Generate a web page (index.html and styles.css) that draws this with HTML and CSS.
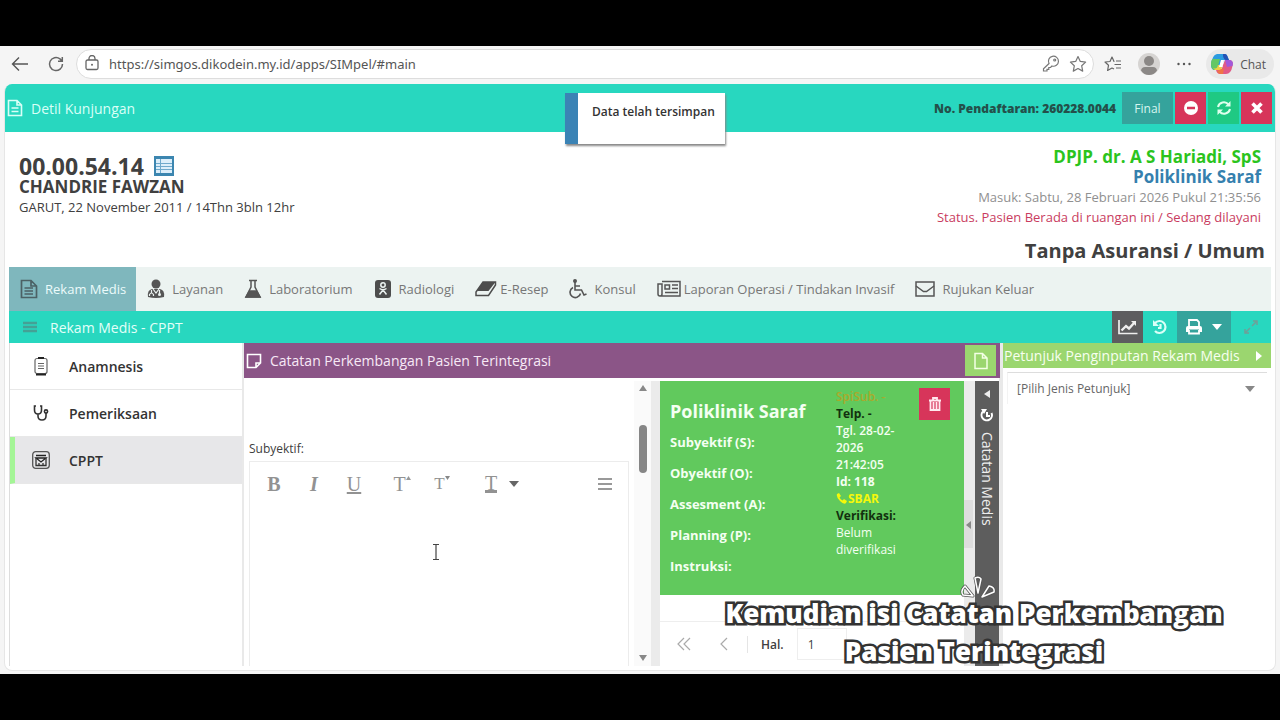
FILE: index.html
```html
<!DOCTYPE html>
<html lang="id">
<head>
    <meta charset="UTF-8">
    <meta name="viewport" content="width=device-width, initial-scale=1.0">
    <title>SIMpel - Detil Kunjungan</title>
    <link rel="stylesheet" href="styles.css">
</head>
<body>

    <div class="browser">
        <!-- Browser bar -->
        <div class="toolbar">
            <button class="nav-btn" aria-label="Kembali">
                <svg width="18" height="18" viewBox="0 0 18 18" fill="none" stroke="#555" stroke-width="1.4"><path d="M17 9H2M8 2.500L1.500 9L8 15.500"/></svg>
            </button>
            <button class="nav-btn" aria-label="Muat ulang">
                <svg width="18" height="18" viewBox="0 0 18 18" fill="none" stroke="#666" stroke-width="1.500"><path d="M15.500 9A6.500 6.500 0 1 1 13 3.900L15 6M15.300 2V6.200H11"/></svg>
            </button>
            <div class="address">
                <svg width="16" height="18" viewBox="0 0 16 18" fill="none" stroke="#666" stroke-width="1.300"><rect x="2" y="5" width="12" height="9.500" rx="1.500"/><path d="M5 5V3.500a3 3 0 0 1 6 0V5"/><circle cx="8" cy="9.700" r="1" fill="#666" stroke="none"/></svg>
                <input class="url" type="text" aria-label="Alamat" value="https://simgos.dikodein.my.id/apps/SIMpel/#main">
                <svg width="18" height="18" viewBox="0 0 18 18" fill="none" stroke="#777" stroke-width="1.200"><path d="M7 8.500A5 5 0 1 1 10 11L8.500 12.500H6.800V14.300H5V16H1.500V13.700Z"/><circle cx="12.700" cy="5" r="1"/></svg>
                <svg width="18" height="18" viewBox="0 0 18 18" fill="none" stroke="#777" stroke-width="1.200" stroke-linejoin="round"><path d="M9 1.500L11.300 6.400L16.600 7.100L12.700 10.800L13.700 16.100L9 13.500L4.300 16.100L5.300 10.800L1.400 7.100L6.700 6.400Z"/></svg>
            </div>
            <div class="browser-tools">
                <svg width="18" height="18" viewBox="0 0 18 18" fill="none" stroke="#666" stroke-width="1.200" stroke-linejoin="round"><path d="M10.500 6.500H10L8 2L6 6.500L1 7L4.500 10.300L3.600 15.500L8 13L10 14M12 6H17M10.500 9.500H17M12 13H17"/></svg>
                <svg width="22" height="22" viewBox="0 0 22 22"><circle cx="11" cy="11" r="11" fill="#d6d4d2"/><circle cx="11" cy="8" r="5" fill="#8b8886"/><path d="M3 17.500Q3.500 14 7 14H15Q18.500 14 19 17.500Q16 22 11 22T3 17.500Z" fill="#8b8886"/></svg>
                <svg width="16" height="16" viewBox="0 0 16 16" fill="#555"><circle cx="2.500" cy="8" r="1.200"/><circle cx="8" cy="8" r="1.200"/><circle cx="13.500" cy="8" r="1.200"/></svg>
                <button class="chat">
                    <svg width="24" height="22" viewBox="0 0 24 22">
                        <path d="M7 1H15Q17 1 17.800 4L19 7H14L10 17H5Q1 17 1 12Q2 2 7 1Z" fill="#2a9be0"/>
                        <path d="M1 11Q1 5 5 6H10L8 13Q7 17 4 17Q1 16 1 11Z" fill="#64c765"/>
                        <path d="M3 15Q7 17 8 12H13L11 17H5Z" fill="#f0cf45"/>
                        <path d="M13 1H15Q17 1 18 5L19 7H16Q14 7 13 3Z" fill="#2452b5"/>
                        <path d="M15 7H20Q24 8 22.500 13Q21 21 16 21H10Q7 21 6 17H10Q12 17 13 12Z" fill="#e15a87"/>
                        <path d="M15 7H20Q24 8 22.500 13L17 14Z" fill="#a259d9"/>
                        <path d="M7 18L14 15L13 21H10Q8 21 7 18Z" fill="#f07446"/>
                        <path d="M11 7L14 7L12.500 14H9Z" fill="#fff"/>
                    </svg>
                    Chat
                </button>
            </div>
        </div>

        <div class="app">
            <!-- Header -->
            <header class="app-header">
                <svg width="16" height="18" viewBox="0 0 16 18" fill="none" stroke="#d9fff7" stroke-width="1.600"><path d="M1.500 1.500H10L14.500 6V16.500H1.500ZM10 1.500V6H14.500M4.500 9H11.500M4.500 12.500H11.500"/></svg>
                <h1>Detil Kunjungan</h1>
                <span class="reg-no">No. Pendaftaran: 260228.0044</span>
                <div class="header-actions">
                    <button class="btn btn-final">Final</button>
                    <button class="btn btn-red" aria-label="Batal">
                        <svg width="16" height="16" viewBox="0 0 16 16"><circle cx="8" cy="8" r="7" fill="#fff"/><path d="M4 8H12" stroke="#d7355a" stroke-width="2.400"/></svg>
                    </button>
                    <button class="btn btn-green" aria-label="Segarkan">
                        <svg width="16" height="16" viewBox="0 0 16 16" fill="none" stroke="#dfffec" stroke-width="2"><path d="M2 7A6 6 0 0 1 12.500 4.500M14 9A6 6 0 0 1 3.500 11.500"/><path d="M14.500 1V6.500H9ZM1.500 15V9.500H7Z" fill="#dfffec" stroke="none"/></svg>
                    </button>
                    <button class="btn btn-red" aria-label="Tutup">
                        <svg width="14" height="14" viewBox="0 0 14 14" stroke="#fff" stroke-width="3.600"><path d="M2.500 2.500L11.500 11.500M11.500 2.500L2.500 11.500"/></svg>
                    </button>
                </div>
            </header>

            <!-- Patient -->
            <section class="patient">
                <div class="patient-id">
                    <div class="mrn">00.00.54.14
                        <svg width="20" height="20" viewBox="0 0 20 20"><rect width="20" height="20" fill="#3c86b0"/><rect x="2" y="3" width="16" height="14" fill="#dceefa"/><path d="M6.500 3V17M2 7.500H18M2 10.500H18M2 13.500H18" stroke="#6fa9cc"/></svg>
                    </div>
                    <div class="name">CHANDRIE FAWZAN</div>
                    <div class="birth">GARUT, 22 November 2011 / 14Thn 3bln 12hr</div>
                </div>
                <div class="visit">
                    <div class="doctor">DPJP. dr. A S Hariadi, SpS</div>
                    <div class="clinic">Poliklinik Saraf</div>
                    <div class="entry">Masuk: Sabtu, 28 Februari 2026 Pukul 21:35:56</div>
                    <div class="status">Status. Pasien Berada di ruangan ini / Sedang dilayani</div>
                    <div class="insurance">Tanpa Asuransi / Umum</div>
                </div>
            </section>

            <div class="record">
                <!-- Tabs -->
                <nav class="tabs">
                    <a href="#rekam" class="tab active">
                        <svg width="18" height="20" viewBox="0 0 18 20" fill="none" stroke="#4c6165" stroke-width="1.700"><path d="M1.500 1.500H11L16.500 7V18.500H1.500ZM11 1.500V7H16.500M4.500 9H13M4.500 12H13M4.500 15H13"/></svg>
                        Rekam Medis
                    </a>
                    <a href="#layanan" class="tab">
                        <svg width="18" height="20" viewBox="0 0 18 20"><circle cx="9" cy="5" r="4.500" fill="#555"/><path d="M1 18Q0 11 5 10H13Q18 11 17 18Q9 20 1 18Z" fill="#555"/><path d="M6 10L9 14L12 10M4.500 11V14M2.500 17V15.500Q4.500 12.500 6.500 15.500V17M12.500 11V15" fill="none" stroke="#ecf3f1" stroke-width="1.200"/><circle cx="12.500" cy="15.500" r="1.500" fill="#ecf3f1"/></svg>
                        Layanan
                    </a>
                    <a href="#lab" class="tab">
                        <svg width="18" height="20" viewBox="0 0 18 20" fill="none" stroke="#555" stroke-width="1.500"><path d="M5 1.500H13M7 1.500V8L2 18H16L11 8V1.500"/><path d="M5.500 12H12.500L16 18H2Z" fill="#555"/></svg>
                        Laboratorium
                    </a>
                    <a href="#radiologi" class="tab">
                        <svg width="18" height="18" viewBox="0 0 18 18"><rect x="1" width="16" height="18" rx="3" fill="#4d4d4d"/><g fill="none" stroke="#ecf3f1" stroke-width="1.500"><circle cx="9" cy="5" r="2.200"/><path d="M5.500 8.500Q9 11 12.500 8.500M9 10L5.500 14.500M9 10L12.500 14.500"/></g></svg>
                        Radiologi
                    </a>
                    <a href="#resep" class="tab snug">
                        <svg width="22" height="18" viewBox="0 0 22 18"><path d="M8 2H20.500L13.500 11H2Z" fill="#4d4d4d"/><path d="M8 2H20.500V5L13.500 15.500H1V12Z" fill="none" stroke="#4d4d4d" stroke-width="1.500"/></svg>
                        E-Resep
                    </a>
                    <a href="#konsul" class="tab">
                        <svg width="18" height="20" viewBox="0 0 18 20" fill="none" stroke="#555" stroke-width="1.600"><circle cx="6" cy="2" r="1.200" fill="#555"/><path d="M6 3V11H12.500L15 16L17.500 15M6 7H11M4 8.500A5.300 5.300 0 1 0 11.500 14.500"/></svg>
                        Konsul
                    </a>
                    <a href="#laporan" class="tab snug">
                        <svg width="24" height="18" viewBox="0 0 24 18" fill="none" stroke="#555" stroke-width="1.500"><path d="M5 1.500H23V16H3Q1 16 1 14V4H5V14Q5 16 3 16M15 5H21M15 8.500H21M8 12.500H21"/><rect x="8" y="5" width="4.500" height="4"/></svg>
                        Laporan Operasi / Tindakan Invasif
                    </a>
                    <a href="#rujukan" class="tab">
                        <svg width="20" height="18" viewBox="0 0 20 18" fill="none" stroke="#555" stroke-width="1.500"><rect x="1" y="2" width="18" height="14"/><path d="M1 6L8.500 11.500H11.500L19 6"/></svg>
                        Rujukan Keluar
                    </a>
                </nav>

                <div class="subheader">
                    <svg width="14" height="12" viewBox="0 0 14 12" stroke="#44a195" stroke-width="2.400"><path d="M0 2H14M0 6H14M0 10H14"/></svg>
                    <h2>Rekam Medis - CPPT</h2>
                    <div class="sub-actions">
                        <button class="sub-btn dark" aria-label="Grafik">
                            <svg width="20" height="16" viewBox="0 0 20 16" fill="none" stroke="#eee" stroke-width="1.700"><path d="M1 1V14.500H19.500"/><path d="M3.500 11.500L8 7L11 9.500L16 4" stroke-width="2.400"/><path d="M13 2H18V7Z" fill="#eee" stroke="none"/></svg>
                        </button>
                        <button class="sub-btn" aria-label="Riwayat">
                            <svg width="16" height="16" viewBox="0 0 16 16" fill="none" stroke="#d9fff7" stroke-width="2.200"><path d="M3 4A6 6 0 1 1 3 12M8.500 5V9H6"/><path d="M1 1V7H7Z" fill="#d9fff7" stroke="none"/></svg>
                        </button>
                        <button class="sub-btn print" aria-label="Cetak">
                            <svg width="16" height="16" viewBox="0 0 16 16"><path d="M3 7V1H11L13 3V7" fill="none" stroke="#fff" stroke-width="1.800"/><path d="M0 9Q0 7 2 7H14Q16 7 16 9V13H13V10.500H3V13H0Z" fill="#fff"/><path d="M3 11V14.500H13V11" fill="none" stroke="#fff" stroke-width="1.800"/></svg>
                            <svg width="10" height="6" viewBox="0 0 10 6"><path d="M0 0H10L5 6Z" fill="#fff"/></svg>
                        </button>
                        <button class="sub-btn" aria-label="Layar penuh">
                            <svg width="14" height="14" viewBox="0 0 14 14" fill="none" stroke="#6f9f98" stroke-width="1.500"><path d="M8 6L12.500 1.500M6 8L1.500 12.500M9 1H13V5M1 9V13H5"/></svg>
                        </button>
                    </div>
                </div>

                <div class="columns">
                    <!-- Menu -->
                    <nav class="side-menu">
                        <a href="#anamnesis" class="menu-item">
                            <svg width="18" height="20" viewBox="0 0 18 20" fill="none" stroke="#666" stroke-width="1.200"><rect x="3" y="2.500" width="12" height="15" rx="2"/><path d="M6 7.500H12M6 10H12M6 12.500H12"/><path d="M6 2H12M4 18.500H14" stroke="#222" stroke-width="2.200"/></svg>
                            Anamnesis
                        </a>
                        <a href="#pemeriksaan" class="menu-item">
                            <svg width="18" height="18" viewBox="0 0 18 18" fill="none" stroke="#333" stroke-width="1.600"><path d="M4 2H2.500V6Q2.500 10 6 10T9.500 6V2H8M6 10V12Q6 16 10 16T14 12V9"/><circle cx="14" cy="7.500" r="1.600"/></svg>
                            Pemeriksaan
                        </a>
                        <a href="#cppt" class="menu-item active">
                            <svg width="18" height="18" viewBox="0 0 18 18" fill="none" stroke="#555" stroke-width="1.300"><rect x=".700" y=".700" width="16.600" height="16.600" rx="3"/><path d="M4 4.500H14M4 7H14L9 11Z" stroke="#222"/><path d="M4 7V14.500H14V7M7 14V12M11 14V12" stroke="#333"/></svg>
                            CPPT
                        </a>
                    </nav>

                    <!-- CPPT -->
                    <main class="cppt">
                        <div class="cppt-header">
                            <svg width="16" height="16" viewBox="0 0 16 16" fill="none" stroke="#fff" stroke-width="1.600"><path d="M1.500 1.500H14.500V10L10 14.500H1.500ZM14.500 10H10V14.500"/></svg>
                            <h3>Catatan Perkembangan Pasien Terintegrasi</h3>
                            <button class="new-btn" aria-label="Baru">
                                <svg width="14" height="18" viewBox="0 0 14 18" fill="none" stroke="#f3ffe5" stroke-width="1.500"><path d="M1 1.500H8.500L13 6V16.500H1ZM8.500 1.500V6H13"/></svg>
                            </button>
                        </div>
                        <div class="cppt-body">
                            <div class="form">
                                <label for="subyektif">Subyektif:</label>
                                <div class="editor">
                                    <div class="editor-bar">
                                        <button class="tool"><b>B</b></button>
                                        <button class="tool"><b><i>I</i></b></button>
                                        <button class="tool"><u>U</u></button>
                                        <button class="tool grow" aria-label="Perbesar">T<svg width="5" height="4" viewBox="0 0 5 4"><path d="M0 4H5L2.500 0Z" fill="#999"/></svg></button>
                                        <button class="tool shrink" aria-label="Perkecil">T<svg width="5" height="4" viewBox="0 0 5 4"><path d="M0 0H5L2.500 4Z" fill="#888"/></svg></button>
                                        <button class="tool color" aria-label="Warna teks"><span>T</span><svg width="10" height="6" viewBox="0 0 10 6"><path d="M0 0H10L5 6Z" fill="#666"/></svg></button>
                                        <button class="tool more" aria-label="Menu"><svg width="14" height="12" viewBox="0 0 14 12" stroke="#999" stroke-width="2"><path d="M0 1H14M0 6H14M0 11H14"/></svg></button>
                                    </div>
                                    <textarea id="subyektif"></textarea>
                                </div>
                            </div>
                            <div class="scrollbar">
                                <svg width="8" height="6" viewBox="0 0 8 6"><path d="M0 6H8L4 0Z" fill="#888"/></svg>
                                <div class="thumb"></div>
                                <svg width="8" height="6" viewBox="0 0 8 6"><path d="M0 0H8L4 6Z" fill="#888"/></svg>
                            </div>
                            <div class="splitter"></div>
                            <div class="history">
                                <article class="note">
                                    <div class="soap">
                                        <h4>Poliklinik Saraf</h4>
                                        <p>Subyektif (S):</p>
                                        <p>Obyektif (O):</p>
                                        <p>Assesment (A):</p>
                                        <p>Planning (P):</p>
                                        <p>Instruksi:</p>
                                    </div>
                                    <div class="meta">
                                        <div class="sub">SpiSub. -</div>
                                        <div class="black">Telp. -</div>
                                        <div>Tgl. 28-02-2026 21:42:05</div>
                                        <div class="bold">Id: 118</div>
                                        <div class="sbar"><svg width="11" height="11" viewBox="0 0 11 11"><path d="M1 1L3 0L5 3L3.500 4.500Q4.500 6.500 6.500 7.500L8 6L11 8L10 10Q8 12 4 8T1 1Z" fill="#f5f80a"/></svg>SBAR</div>
                                        <div class="black">Verifikasi:</div>
                                        <div class="plain">Belum diverifikasi</div>
                                    </div>
                                    <button class="btn btn-red" aria-label="Hapus">
                                        <svg width="12" height="16" viewBox="0 0 12 16" fill="none" stroke="#ffe9ee" stroke-width="1.800"><path d="M0 4.500H12M4 4V2H8V4M1.500 4V14H10.500V4M4.500 6V13M7.500 6V13"/></svg>
                                    </button>
                                </article>
                                <div class="pager">
                                    <button aria-label="Pertama"><svg width="14" height="14" viewBox="0 0 14 14" fill="none" stroke="#aaa" stroke-width="1.200"><path d="M7 1L1 7L7 13M13 1L7 7L13 13"/></svg></button>
                                    <button aria-label="Sebelumnya"><svg width="8" height="14" viewBox="0 0 8 14" fill="none" stroke="#aaa" stroke-width="1.200"><path d="M7 1L1 7L7 13"/></svg></button>
                                    <label for="halaman">Hal.</label>
                                    <input id="halaman" type="text" value="1">
                                </div>
                            </div>
                            <div class="splitter collapse"><button aria-label="Ciutkan"><svg width="5" height="8" viewBox="0 0 5 8"><path d="M5 0V8L0 4Z" fill="#888"/></svg></button></div>
                            <button class="collapsed-panel">
                                <svg width="6" height="8" viewBox="0 0 6 8"><path d="M6 0V8L0 4Z" fill="#eee"/></svg>
                                <svg width="14" height="14" viewBox="0 0 14 14" fill="none" stroke="#fff" stroke-width="2"><path d="M3 3.500A5.200 5.200 0 1 0 11.500 5M7 4V8H10"/><path d="M1 1H7L4 6Z" fill="#fff" stroke="none"/></svg>
                                Catatan Medis
                            </button>
                        </div>
                    </main>

                    <!-- Petunjuk -->
                    <aside class="guide">
                        <div class="guide-header">
                            <h3>Petunjuk Penginputan Rekam Medis</h3>
                            <svg width="6" height="10" viewBox="0 0 6 10"><path d="M0 0V10L6 5Z" fill="#fff"/></svg>
                        </div>
                        <div class="guide-select">
                            <select aria-label="Jenis petunjuk">
                                <option>[Pilih Jenis Petunjuk]</option>
                            </select>
                            <svg width="10" height="6" viewBox="0 0 10 6"><path d="M0 0H10L5 6Z" fill="#888"/></svg>
                        </div>
                    </aside>
                </div>
            </div>
        </div>
    </div>

    <!-- Overlays -->
    <div class="toast" role="status">Data telah tersimpan</div>
    <svg class="cursor" width="8" height="18" viewBox="0 0 8 18" fill="none" stroke="#444" stroke-width="1.200"><path d="M1 1.500H7M4 1.500V16.500M1 16.500H7"/></svg>
    <div class="caption">
        <svg class="spark" width="36" height="24" viewBox="0 0 36 24" fill="none" stroke-linejoin="round">
            <path d="M13 20L5 10Q0 15 3 19ZM18 17L15 2Q19 0 21 3ZM22 21L29 10Q35 11 34 16Z" stroke="#555" stroke-width="3"/>
            <path d="M13 20L5 10Q0 15 3 19ZM18 17L15 2Q19 0 21 3ZM22 21L29 10Q35 11 34 16Z" stroke="#fff" stroke-width="1.500"/>
        </svg>
        <div>Kemudian isi Catatan Perkembangan</div>
        <div>Pasien Terintegrasi</div>
    </div>

</body>
</html>
```
FILE: styles.css
```css
* {
    box-sizing: border-box;
}
body {
    margin: 0;
    min-height: 100vh;
    padding: 46px 0;
    background: #000;
    display: flex;
    flex-direction: column;
    font-family: "Open Sans", "Noto Sans", sans-serif;
    font-size: 13px;
    color: #404040;
}
h1, h2, h3, h4, p {
    margin: 0;
    font-weight: inherit;
}
button {
    border: none;
    padding: 0;
    background: none;
    font-family: inherit;
    color: inherit;
    cursor: pointer;
}
svg {
    flex: none;
}
a {
    text-decoration: none;
    color: inherit;
}
.browser {
    flex: 1;
    display: flex;
    flex-direction: column;
    background: #f5f5f5;
}

/* Browser bar */
.toolbar {
    display: flex;
    align-items: center;
    height: 36px;
    padding: 0 6px 0 11px;
}
.nav-btn {
    width: 18px;
    height: 18px;
    margin-right: 18px;
}
.address {
    flex: 1;
    display: flex;
    align-items: center;
    gap: 9px;
    height: 30px;
    margin-left: -7px;
    padding: 0 6px 0 7px;
    background: #fff;
    border: 1px solid #ddd;
    border-radius: 15px;
}
.url {
    flex: 1;
    min-width: 0;
    border: none;
    outline: none;
    padding: 0;
    background: none;
    font-family: "Noto Sans", "Open Sans", sans-serif;
    font-size: 13px;
    color: #555;
}
.browser-tools {
    display: flex;
    align-items: center;
    gap: 16px;
    margin-left: 10px;
}
.chat {
    display: flex;
    align-items: center;
    gap: 6px;
    height: 30px;
    padding: 0 8px 0 4px;
    margin-left: -2px;
    border-radius: 15px;
    background: #e9e9e9;
    font-size: 12px;
    color: #555;
}

/* App */
.app {
    flex: 1;
    display: flex;
    flex-direction: column;
    margin: 2px 4px 3px;
    background: #fff;
    border: 1px solid #e6e6e6;
    border-top: none;
    border-radius: 8px;
    overflow: hidden;
}
.app-header {
    display: flex;
    align-items: center;
    height: 48px;
    padding: 0 3px 0 2px;
    background: #28d7bf;
    color: #d9fff7;
}
.app-header h1 {
    margin-left: 8px;
    font-size: 14px;
}
.reg-no {
    margin-left: auto;
    margin-right: 6px;
    font-size: 12px;
    font-weight: 800;
    color: #24504a;
}
.header-actions {
    display: flex;
    gap: 2px;
}
.btn {
    width: 31px;
    height: 32px;
    display: flex;
    align-items: center;
    justify-content: center;
}
.btn-final {
    width: 51px;
    background: #35a39c;
    font-size: 12px;
    color: #d5f5ef;
}
.btn-red {
    background: #d7355a;
}
.btn-green {
    background: #1fc983;
}

/* Patient */
.patient {
    display: flex;
    justify-content: space-between;
    height: 135px;
    padding: 15px 14px 0;
}
.patient-id {
    padding-top: 7px;
}
.mrn {
    display: flex;
    align-items: center;
    gap: 10px;
    font-size: 23px;
    line-height: 24px;
    font-weight: 700;
}
.name {
    font-size: 17px;
    line-height: 18px;
    font-weight: 700;
}
.birth {
    font-size: 13px;
    line-height: 22px;
}
.visit {
    text-align: right;
}
.doctor, .clinic {
    font-size: 17px;
    line-height: 20px;
    font-weight: 700;
    color: #2bc41d;
}
.clinic {
    color: #3580ae;
}
.entry, .status {
    font-size: 13px;
    line-height: 20px;
    color: #909090;
}
.status {
    color: #c93c60;
}
.insurance {
    padding-top: 10px;
    margin-right: -4px;
    font-size: 20px;
    line-height: 28px;
    font-weight: 700;
}

/* Tabs */
.record {
    flex: 1;
    display: flex;
    flex-direction: column;
    margin: 0 4px 4px;
}
.tabs {
    display: flex;
    height: 44px;
    background: #ecf3f1;
    color: #777;
}
.tab {
    display: flex;
    align-items: center;
    gap: 7px;
    padding: 0 10px 0 11px;
    font-size: 13px;
    white-space: nowrap;
}
.tab.snug {
    gap: 3px;
}
.tab.active {
    background: #7fb7bd;
    color: #ecfbfb;
}
.subheader {
    display: flex;
    align-items: center;
    height: 32px;
    padding-left: 14px;
    background: #28d7bf;
    color: #e3fff9;
}
.subheader h2 {
    margin-left: 13px;
    font-size: 14px;
}
.sub-actions {
    display: flex;
    align-self: stretch;
    margin-left: auto;
}
.sub-btn {
    display: flex;
    align-items: center;
    justify-content: center;
    gap: 10px;
    width: 34px;
}
.sub-btn.dark {
    width: 31px;
    background: #5d5d5f;
}
.sub-btn.print {
    width: 54px;
    background: #35a39c;
}
.sub-btn:last-child {
    width: 40px;
}

/* Columns */
.columns {
    flex: 1;
    display: flex;
}
.side-menu {
    flex: 0 0 235px;
    border-left: 1px solid #ddd;
    border-right: 2px solid #e9e9e9;
}
.menu-item {
    display: flex;
    align-items: center;
    gap: 19px;
    height: 47px;
    padding-left: 22px;
    border-bottom: 1px solid #e8e8e8;
    font-size: 14px;
    font-weight: 600;
    color: #333;
}
.menu-item.active {
    padding-left: 17px;
    border-left: 5px solid #a4f596;
    background: #e7e7e9;
}
.cppt {
    flex: 1;
    min-width: 0;
    display: flex;
    flex-direction: column;
}
.cppt-header {
    display: flex;
    align-items: center;
    height: 35px;
    padding: 0 4px 0 2px;
    background: #8b5587;
    color: #f7e9f6;
}
.cppt-header h3 {
    margin-left: 8px;
    font-size: 14px;
}
.new-btn {
    display: flex;
    align-items: center;
    justify-content: center;
    width: 31px;
    height: 31px;
    margin-left: auto;
    background: #9bd66f;
}
.cppt-body {
    flex: 1;
    display: flex;
    padding-top: 3px;
    border-right: 1px solid #e9e9e9;
}
.form {
    flex: 1;
    display: flex;
    flex-direction: column;
    padding: 56px 5px 0;
}
.form label {
    font-size: 12px;
    line-height: 24px;
}
.editor {
    flex: 1;
    display: flex;
    flex-direction: column;
    border: 1px solid #ececec;
    border-bottom: none;
}
.editor-bar {
    display: flex;
    align-items: center;
    height: 44px;
    padding: 0 8px 0 4px;
}
.tool {
    display: flex;
    align-items: center;
    justify-content: center;
    width: 40px;
    height: 28px;
    font-family: "Liberation Serif", serif;
    font-size: 20px;
    color: #929292;
}
.grow {
    margin-left: 8px;
}
.shrink {
    font-size: 17px;
}
.grow svg, .shrink svg {
    align-self: flex-start;
    margin-top: 6px;
}
.color {
    gap: 12px;
    margin-left: 20px;
}
.color span {
    line-height: 14px;
    border-bottom: 3px solid #929292;
}
.more {
    width: 30px;
    margin-left: auto;
}
textarea {
    flex: 1;
    border: none;
    outline: none;
    resize: none;
    background: none;
    font-family: inherit;
    font-size: 13px;
}
.scrollbar {
    display: flex;
    flex-direction: column;
    align-items: center;
    width: 17px;
    padding: 4px 0 5px;
    background: #fafafa;
}
.thumb {
    width: 8px;
    height: 48px;
    margin: 34px 0 auto;
    border-radius: 4px;
    background: #868686;
}
.splitter {
    display: flex;
    align-items: center;
    width: 9px;
    background: #ebebeb;
}
.splitter.collapse {
    width: 11px;
}
.splitter button {
    width: 9px;
    height: 48px;
    background: #ddd;
}
.history {
    flex: 0 0 304px;
    display: flex;
    flex-direction: column;
}
.note {
    display: flex;
    align-items: flex-start;
    height: 214px;
    padding: 7px 14px 0 10px;
    background: #61c95d;
    color: #f4fff2;
}
.soap {
    width: 166px;
    padding-top: 7px;
    font-weight: 700;
}
.soap h4 {
    font-size: 18px;
    line-height: 32px;
}
.soap p {
    font-size: 13px;
    line-height: 31px;
}
.meta {
    width: 74px;
    font-size: 12px;
    line-height: 17px;
    font-weight: 600;
}
.meta .sub {
    color: #a9a92c;
    white-space: nowrap;
}
.meta .black {
    font-weight: 700;
    color: #12300f;
}
.meta .bold {
    font-weight: 700;
}
.meta .plain {
    font-weight: 400;
}
.meta .sbar {
    display: flex;
    align-items: center;
    gap: 1px;
    font-weight: 700;
    color: #f5f80a;
}
.note .btn {
    margin-left: auto;
}
.pager {
    flex: 1;
    display: flex;
    align-items: center;
    margin-top: 26px;
    padding-left: 17px;
    border-top: 1px solid #eee;
    font-size: 12px;
}
.pager button {
    width: 14px;
    height: 14px;
    margin-right: 26px;
}
.pager button + button {
    margin-right: 16px;
}
.pager label {
    padding-left: 13px;
    border-left: 1px solid #e5e5e5;
    font-weight: 600;
}
.pager input {
    width: 50px;
    height: 32px;
    margin-left: 13px;
    padding: 0 10px;
    border: 1px solid #eee;
    outline: none;
    font-family: inherit;
    font-size: 12px;
    color: #404040;
}
.collapsed-panel {
    display: flex;
    align-items: center;
    gap: 10px;
    width: 24px;
    padding: 9px 0;
    background: #5d5d5d;
    writing-mode: vertical-rl;
    font-size: 14px;
    color: #eee;
}

/* Petunjuk */
.guide {
    flex: 0 0 271px;
    border-left: 3px solid #e9e9e9;
}
.guide-header {
    display: flex;
    align-items: center;
    justify-content: space-between;
    height: 25px;
    padding: 0 9px 0 1px;
    background: #9bd66f;
    color: #f7fff0;
}
.guide-header h3 {
    font-size: 14px;
    white-space: nowrap;
}
.guide-select {
    display: flex;
    align-items: center;
    height: 32px;
    margin: 4px;
    padding: 0 12px 0 9px;
    border-top: 1px solid #ddd;
    border-left: 1px solid #f3f3f3;
}
.guide-select select {
    flex: 1;
    padding: 0;
    border: none;
    outline: none;
    appearance: none;
    background: none;
    font-family: inherit;
    font-size: 12px;
    color: #666;
}

/* Overlays */
.toast {
    position: absolute;
    top: 93px;
    left: 565px;
    width: 160px;
    height: 51px;
    padding: 10px 0 0 14px;
    border-left: 13px solid #3b83b5;
    background: #fff;
    box-shadow: 1px 2px 2px #888;
    font-size: 12px;
    font-weight: 600;
    color: #333;
}
.cursor {
    position: absolute;
    top: 543px;
    left: 432px;
}
.caption {
    position: absolute;
    top: 594px;
    left: 694px;
    width: 560px;
    text-align: center;
    font-family: "Open Sans", sans-serif;
    font-size: 26px;
    font-weight: 800;
    line-height: 38px;
    color: #fff;
    -webkit-text-stroke: 5px #333;
    paint-order: stroke fill;
    text-shadow: 1px 2px 0 #333;
    white-space: nowrap;
}
.spark {
    position: absolute;
    top: -18px;
    left: 266px;
}
```
